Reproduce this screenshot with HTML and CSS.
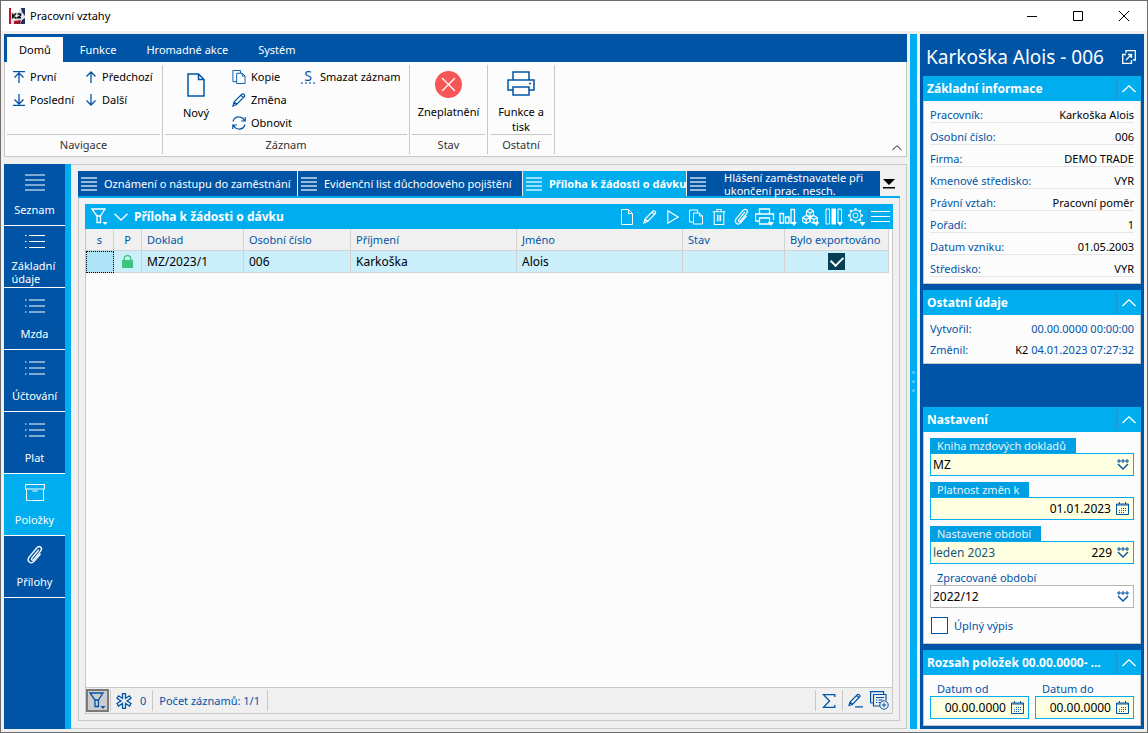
FILE: index.html
```html
<!DOCTYPE html>
<html lang="cs">
<head>
<meta charset="utf-8">
<meta name="viewport" content="width=device-width, initial-scale=1">
<title>Pracovní vztahy</title>
<link rel="stylesheet" href="styles.css">
</head>
<body>
<svg class="sprite" aria-hidden="true">
  <symbol id="i-lines" viewBox="0 0 20 18"><path d="M0 1.500h20M0 6.500h20M0 11.500h20M0 16.500h20"/></symbol>
  <symbol id="i-list" viewBox="0 0 20 16"><path d="M0 1.500h1.500M0 7.500h1.500M0 13.500h1.500M4 1.500h16M4 7.500h16M4 13.500h16"/></symbol>
  <symbol id="i-box" viewBox="0 0 20 18"><path d="M.5 1h19v4.500h-19zM1.500 5.500v11.500h17v-11.500M7.500 7.500h5"/></symbol>
  <symbol id="i-clip" viewBox="0 0 18 20"><path stroke-width="1.300" d="M12.500 5.500l-6.500 8c-1 1.400.6 2.700 1.700 1.400l6.800-8.300c2.200-3-1.300-5.700-3.700-3L3.500 12.300c-2.900 4 1.500 7.700 4.800 4l6-7"/></symbol>
  <symbol id="i-page" viewBox="0 0 18 24"><path d="M1 1h10.500L17 6.500V23H1zM11.500 1v5.500H17"/></symbol>
  <symbol id="i-page-s" viewBox="0 0 12 16"><path d="M.5.500h7l4 4v11H.5zM7.500.500v4h4"/></symbol>
  <symbol id="i-copy" viewBox="0 0 14 15"><path d="M4.500 12.500h-4v-12h8v3M4.500 3.500h6l3 3v8h-9zM10.500 3.500v3h3"/></symbol>
  <symbol id="i-pen" viewBox="0 0 14 14"><path stroke-width="1.200" d="M1 13l1-4 8-8c1.500-.8 3.200 1 2.500 2.500l-8 8zM2 9l3 2.800M9 2.200l2.700 2.600"/></symbol>
  <symbol id="i-refresh" viewBox="0 0 14 14"><path stroke-width="1.200" d="M1 5.500C2 2 5 .8 7.500 1s4 1.700 5 3.500M13.200 1v4h-4M13 8.500c-1 3.500-4 4.700-6.500 4.500s-4-1.700-5-3.500M.8 13V9h4"/></symbol>
  <symbol id="i-first" viewBox="0 0 12 12"><path stroke-width="1.300" d="M0 .7h12M6 12V2M1.500 6.500L6 2l4.500 4.500"/></symbol>
  <symbol id="i-last" viewBox="0 0 12 12"><path stroke-width="1.300" d="M0 11.300h12M6 0v10M1.500 5.500L6 10l4.500-4.500"/></symbol>
  <symbol id="i-up" viewBox="0 0 12 12"><path stroke-width="1.300" d="M6 12V1M1.500 5.500L6 1l4.500 4.500"/></symbol>
  <symbol id="i-down" viewBox="0 0 12 12"><path stroke-width="1.300" d="M6 0v11M1.500 6.500L6 11l4.500-4.500"/></symbol>
  <symbol id="i-printer" viewBox="0 0 28 26"><path d="M6 9V1h16v8M6 19H1V9h26v10h-5M6 16h16v8H6zM22 12.500h2"/></symbol>
  <symbol id="i-funnel" viewBox="0 0 17 17"><path stroke-width="1.300" d="M1 1h13L9.500 8v6.500h-3.500V8zM6 8h3.500"/><path class="solid" d="M11.500 14h5l-2.500 3z"/></symbol>
  <symbol id="i-chev-up" viewBox="0 0 14 8"><path stroke-width="1.300" d="M.5 7L7 .8 13.500 7"/></symbol>
  <symbol id="i-chev-down" viewBox="0 0 14 8"><path stroke-width="1.300" d="M.5 .8L7 7 13.500 .8"/></symbol>
  <symbol id="i-play" viewBox="0 0 12 14"><path d="M1.500 1.500l9 5.500-9 5.500z"/></symbol>
  <symbol id="i-trash" viewBox="0 0 12 15"><path d="M0 2.500h12M4 2.500v-2h4v2M1.500 2.500v12h9v-12M4.500 5.500v6M6 5.500v6M7.500 5.500v6"/></symbol>
  <symbol id="i-print-s" viewBox="0 0 20 18"><path stroke-width="1.300" d="M4.500 6V1h10v5M4.500 13h-4V6h18v6M4.500 10h10v6h-10z"/><path class="solid" d="M13 14h6l-3 4z"/></symbol>
  <symbol id="i-chart" viewBox="0 0 18 18"><path stroke-width="1.300" d="M1 5.500h3.500v9.500H1zM6.500 9h3.500v6H6.500zM12 1.500h3.500v13.500H12z"/><path class="solid" d="M12 14h6l-3 4z"/></symbol>
  <symbol id="i-cubes" viewBox="0 0 18 18"><path stroke-width="1.200" d="M8 1l3.500 2v4L8 9 4.500 7V3zM4.500 3L8 5l3.500-2M8 5v4M4.200 7.500l3.500 2v4l-3.500 2-3.500-2v-4zM.7 9.500l3.500 2 3.500-2M4.200 11.500v4M11.800 7.500l3.500 2v4l-3.500 2-3.500-2v-4zM8.300 9.500l3.500 2 3.500-2M11.800 11.500v4"/><path class="solid" d="M11.500 14h6l-3 4z"/></symbol>
  <symbol id="i-columns" viewBox="0 0 18 18"><path d="M1 1h3.500v15H1zM13 1h3.500v14H13z"/><path class="solid" d="M6.500.500h4.500v16H6.500zM12 14h6l-3 4z"/></symbol>
  <symbol id="i-gear" viewBox="0 0 18 18"><circle cx="7.500" cy="7.500" r="2.500"/><circle cx="7.500" cy="7.500" r="5.500"/><path stroke-width="2" d="M7.500 0v2M7.500 13v2M0 7.500h2M13 7.500h2M2.200 2.200l1.400 1.400M11.400 11.400l1.400 1.400M2.200 12.800l1.400-1.400M11.400 3.600l1.400-1.400"/><path class="solid" d="M11.500 14h6l-3 4z"/></symbol>
  <symbol id="i-menu" viewBox="0 0 19 13"><path d="M0 1.500h19M0 6.500h19M0 11.500h19"/></symbol>
  <symbol id="i-popout" viewBox="0 0 14 14"><path stroke-width="1.300" d="M4 4.500H.7v8.800h8.800V10M4 3V.7h9.300v9.300H11M6 4.500h3.500v3.500M4 10l5.500-5.500"/></symbol>
  <symbol id="i-lookup" viewBox="0 0 12 11"><path d="M1 1h2v2H1zM5 1h2v2H5zM9 1h2v2H9z"/><path stroke-width="1.400" d="M1 5l5 5 5-5"/></symbol>
  <symbol id="i-cal" viewBox="0 0 13 13"><path d="M.5 2h12v10.500H.5zM.5 3h12M3.500 0v2M9.500 0v2"/><path stroke-dasharray="1 1" d="M5 6.500h6M3 8.500h8M3 10.500h6"/></symbol>
  <symbol id="i-sum" viewBox="0 0 13 14"><path stroke-width="1.300" d="M12.300 3V.7H1L7 7l-6 6.300h11.300V11"/></symbol>
  <symbol id="i-star" viewBox="0 0 16 16"><path stroke-width="1.300" d="M6.500.7h3v4.600l4-2.500 1.500 2.400L11 8l4 2.500-1.500 2.500-4-2.500v4.800h-3v-4.800l-4 2.500L1 10.500 5 8 1 5.200l1.500-2.400 4 2.500z"/></symbol>
  <symbol id="i-sign" viewBox="0 0 15 14"><path stroke-width="1.200" d="M1 12l1-3.500L9.500 1c1.500-.6 2.800.8 2.500 2L4.500 11zM2 8.500L4.500 11M8.500 2l2.500 2.300M7 13.400h8"/></symbol>
  <symbol id="i-sheet" viewBox="0 0 19 19"><path stroke-width="1.200" d="M11 15H3.500V3.500M.6 12V.6h13v3M.6 12h3M3.500 3.500h12.500v6M6 6.500h8M6 9h1.200M6 11.500h1.200M8.500 9h4M8.500 11.500h2"/><circle class="plus" cx="14" cy="14" r="4.200"/><path d="M11.800 14h4.400M14 11.800v4.400"/></symbol>
  <symbol id="i-lock" viewBox="0 0 11 13"><path class="solid" d="M0 5h11v8H0z"/><path stroke-width="1.300" d="M2.200 5V3.500a3.300 3 0 0 1 6.600 0V5"/></symbol>
</svg>

<div class="window">
  <header class="titlebar">
    <svg class="logo" viewBox="0 0 16 16"><rect width="16" height="16" fill="#e2e4ea"/><path fill="#c8102e" d="M0 0h2v16H0z"/><path fill="#25305c" d="M12 0h4v8l-3-4zM13 12l3-2v6h-5z"/><path fill="#a3142b" d="M5 13l7-1-1 4H5z"/><path fill="#fff" d="M2 0h9l-2 4H2z"/><path stroke="#111" stroke-width="1.500" fill="none" d="M3.700 5.500v5M7 5.500L4.500 8 7 10.500M8.500 6h3v1.500L8.500 9.800H12"/></svg>
    <h1>Pracovní vztahy</h1>
    <div class="winctl">
      <button aria-label="Minimalizovat"><svg viewBox="0 0 10 10"><path d="M0 5.500h10"/></svg></button>
      <button aria-label="Maximalizovat"><svg viewBox="0 0 10 10"><path d="M.5.500h9v9h-9z"/></svg></button>
      <button aria-label="Zavřít"><svg viewBox="0 0 10 10"><path d="M0 0l10 10M10 0L0 10"/></svg></button>
    </div>
  </header>

  <div class="workspace">
    <div class="left">
      <section class="ribbon">
        <nav class="ribbon-tabs">
          <button class="on">Domů</button><button>Funkce</button><button>Hromadné akce</button><button>Systém</button>
        </nav>
        <div class="ribbon-body">
          <div class="group">
            <div class="tools">
              <div class="stack first-stack">
                <button><svg class="s12"><use href="#i-first"/></svg>První</button>
                <button><svg class="s12"><use href="#i-last"/></svg>Poslední</button>
              </div>
              <div class="stack">
                <button><svg class="s12"><use href="#i-up"/></svg>Předchozí</button>
                <button><svg class="s12"><use href="#i-down"/></svg>Další</button>
              </div>
            </div>
            <div class="caption">Navigace</div>
          </div>
          <div class="group wide">
            <div class="tools">
              <button class="big new"><svg class="page-icon"><use href="#i-page"/></svg>Nový</button>
              <div class="stack">
                <button><svg class="s14"><use href="#i-copy"/></svg>Kopie</button>
                <button><svg class="s14"><use href="#i-pen"/></svg>Změna</button>
                <button><svg class="s14"><use href="#i-refresh"/></svg>Obnovit</button>
              </div>
              <div class="stack">
                <button><span class="erase">S</span>Smazat záznam</button>
              </div>
            </div>
            <div class="caption">Záznam</div>
          </div>
          <div class="group state">
            <div class="tools">
              <button class="big"><svg class="stop-icon" viewBox="0 0 27 27"><circle cx="13.500" cy="13.500" r="13.500" fill="#f75656" stroke="none"/><path stroke="#fff" stroke-width="1.300" d="M7 7l13 13M20 7L7 20"/></svg>Zneplatnění</button>
            </div>
            <div class="caption">Stav</div>
          </div>
          <div class="group other">
            <div class="tools">
              <button class="big"><svg class="print-icon"><use href="#i-printer"/></svg>Funkce a<br>tisk</button>
            </div>
            <div class="caption">Ostatní</div>
          </div>
          <button class="collapse" aria-label="Sbalit pás"><svg viewBox="0 0 14 8"><use href="#i-chev-up"/></svg></button>
        </div>
      </section>

      <div class="lower">
        <nav class="side">
          <button><svg class="s20"><use href="#i-lines"/></svg><span>Seznam</span></button>
          <button class="two"><svg class="s20"><use href="#i-list"/></svg><span>Základní údaje</span></button>
          <button><svg class="s20"><use href="#i-list"/></svg><span>Mzda</span></button>
          <button><svg class="s20"><use href="#i-list"/></svg><span>Účtování</span></button>
          <button><svg class="s20"><use href="#i-list"/></svg><span>Plat</span></button>
          <button class="on"><svg class="s20"><use href="#i-box"/></svg><span>Položky</span></button>
          <button><svg class="s20"><use href="#i-clip"/></svg><span>Přílohy</span></button>
        </nav>

        <main class="content">
          <div class="doc-tabs">
            <button class="t1"><svg class="tab-icon"><path d="M0 1h16M0 5h16M0 9h16M0 13h16"/></svg><span>Oznámení o nástupu do zaměstnání</span></button>
            <button class="t2"><svg class="tab-icon"><path d="M0 1h16M0 5h16M0 9h16M0 13h16"/></svg><span>Evidenční list důchodového pojištění</span></button>
            <button class="t3 on"><svg class="tab-icon"><path d="M0 1h16M0 5h16M0 9h16M0 13h16"/></svg><span>Příloha k žádosti o dávku</span></button>
            <button class="t4"><svg class="tab-icon"><path d="M0 1h16M0 5h16M0 9h16M0 13h16"/></svg><span>Hlášení zaměstnavatele při ukončení prac. nesch.</span></button>
            <button class="more" aria-label="Další záložky"><svg viewBox="0 0 12 10"><path d="M0 0h12L6 6zM0 8h12v1.500H0z"/></svg></button>
          </div>
          <div class="sheet">
            <div class="grid-head">
              <button aria-label="Filtr"><svg class="s17"><use href="#i-funnel"/></svg></button>
              <button aria-label="Sbalit"><svg class="chev"><use href="#i-chev-down"/></svg></button>
              <h2>Příloha k žádosti o dávku</h2>
              <div class="grid-tools">
                <button aria-label="Nový"><svg class="s14x16"><use href="#i-page-s"/></svg></button>
                <button aria-label="Změna"><svg class="s14x16"><use href="#i-pen"/></svg></button>
                <button aria-label="Spustit"><svg class="s14x16"><use href="#i-play"/></svg></button>
                <button aria-label="Kopie"><svg class="s14x16"><use href="#i-copy"/></svg></button>
                <button aria-label="Smazat"><svg class="s14x16"><use href="#i-trash"/></svg></button>
                <button aria-label="Přílohy"><svg class="s19"><use href="#i-clip"/></svg></button>
                <button class="sep" aria-label="Tisk"><svg class="s20"><use href="#i-print-s"/></svg></button>
                <button aria-label="Grafy"><svg class="s18"><use href="#i-chart"/></svg></button>
                <button aria-label="Kostky"><svg class="s18"><use href="#i-cubes"/></svg></button>
                <button aria-label="Sloupce"><svg class="s18"><use href="#i-columns"/></svg></button>
                <button aria-label="Nastavení"><svg class="s18"><use href="#i-gear"/></svg></button>
                <button class="sep" aria-label="Menu"><svg class="menu-icon"><use href="#i-menu"/></svg></button>
              </div>
            </div>
            <div class="grid-body">
              <table>
                <colgroup><col class="c28"><col class="c28"><col class="c102"><col class="c107"><col><col><col class="c102"><col class="c104"></colgroup>
                <thead><tr><th class="mid">s</th><th class="mid">P</th><th>Doklad</th><th>Osobní číslo</th><th>Příjmení</th><th>Jméno</th><th>Stav</th><th>Bylo exportováno</th></tr></thead>
                <tbody><tr><td class="focus"></td><td class="mid"><svg class="lock"><use href="#i-lock"/></svg></td><td>MZ/2023/1</td><td>006</td><td>Karkoška</td><td>Alois</td><td></td><td class="mid"><input type="checkbox" class="done" checked aria-label="Bylo exportováno"></td></tr></tbody>
              </table>
            </div>
            <footer class="status">
              <button class="filter" aria-label="Filtr"><svg class="s17"><use href="#i-funnel"/></svg></button>
              <button class="star" aria-label="Označené"><svg class="s16"><use href="#i-star"/></svg>0</button>
              <span class="count">Počet záznamů: 1/1</span>
              <span class="fill"></span>
              <button class="sum" aria-label="Součet"><svg class="s14"><use href="#i-sum"/></svg></button>
              <button aria-label="Upravit"><svg class="s15"><use href="#i-sign"/></svg></button>
              <button aria-label="Přidat seznam"><svg class="s19"><use href="#i-sheet"/></svg></button>
            </footer>
          </div>
        </main>
      </div>
    </div>

    <div class="splitter"><i></i><i></i><i></i></div>

    <aside class="info">
      <header><h2>Karkoška Alois - 006</h2><button aria-label="Otevřít"><svg class="s14"><use href="#i-popout"/></svg></button></header>

      <section class="card">
        <div class="card-head"><h3>Základní informace</h3><button aria-label="Sbalit"><svg class="chev"><use href="#i-chev-up"/></svg></button></div>
        <dl class="facts ruled">
          <div><dt>Pracovník:</dt><dd>Karkoška Alois</dd></div>
          <div><dt>Osobní číslo:</dt><dd>006</dd></div>
          <div><dt>Firma:</dt><dd>DEMO TRADE</dd></div>
          <div><dt>Kmenové středisko:</dt><dd>VYR</dd></div>
          <div><dt>Právní vztah:</dt><dd>Pracovní poměr</dd></div>
          <div><dt>Pořadí:</dt><dd>1</dd></div>
          <div><dt>Datum vzniku:</dt><dd>01.05.2003</dd></div>
          <div><dt>Středisko:</dt><dd>VYR</dd></div>
        </dl>
      </section>

      <section class="card last-fact">
        <div class="card-head"><h3>Ostatní údaje</h3><button aria-label="Sbalit"><svg class="chev"><use href="#i-chev-up"/></svg></button></div>
        <dl class="facts plain">
          <div><dt>Vytvořil:</dt><dd><em>00.00.0000 00:00:00</em></dd></div>
          <div><dt>Změnil:</dt><dd>K2 <em>04.01.2023 07:27:32</em></dd></div>
        </dl>
      </section>

      <section class="card">
        <div class="card-head"><h3>Nastavení</h3><button aria-label="Sbalit"><svg class="chev"><use href="#i-chev-up"/></svg></button></div>
        <div class="form">
          <div class="field req"><label for="f1">Kniha mzdových dokladů</label><div class="box"><input id="f1" value="MZ"><button aria-label="Vybrat knihu"><svg class="look"><use href="#i-lookup"/></svg></button></div></div>
          <div class="field req"><label for="f2">Platnost změn k</label><div class="box"><input id="f2" class="num" value="01.01.2023"><button aria-label="Kalendář"><svg class="s13"><use href="#i-cal"/></svg></button></div></div>
          <div class="field req"><label for="f3">Nastavené období</label><div class="box"><input id="f3" class="blue" value="leden 2023"><output>229</output><button aria-label="Vybrat období"><svg class="look"><use href="#i-lookup"/></svg></button></div></div>
          <div class="field"><label for="f4">Zpracované období</label><div class="box"><input id="f4" value="2022/12"><button aria-label="Vybrat období"><svg class="look"><use href="#i-lookup"/></svg></button></div></div>
          <label class="check"><input type="checkbox">Úplný výpis</label>
        </div>
      </section>

      <section class="card">
        <div class="card-head"><h3>Rozsah položek 00.00.0000- ...</h3><button aria-label="Sbalit"><svg class="chev"><use href="#i-chev-up"/></svg></button></div>
        <div class="form range">
          <div class="field date"><label for="f5">Datum od</label><div class="box"><input id="f5" class="num" value="00.00.0000"><button aria-label="Kalendář"><svg class="s13"><use href="#i-cal"/></svg></button></div></div>
          <div class="field date"><label for="f6">Datum do</label><div class="box"><input id="f6" class="num" value="00.00.0000"><button aria-label="Kalendář"><svg class="s13"><use href="#i-cal"/></svg></button></div></div>
        </div>
      </section>
    </aside>
  </div>
</div>
</body>
</html>
```
FILE: styles.css
```css
:root {
  --blue: #0054a6;
  --cyan: #00adef;
  --line: #c8c8c8;
  --soft: #f0f0f0;
  --paper: #fcfcfc;
}
* { box-sizing: border-box; }
body { margin: 0; font: 11px/16px "Noto Sans", "Open Sans", sans-serif; color: #000; }
h1, h2, h3, dl, dd { margin: 0; font: inherit; }
button { margin: 0; padding: 0; border: 0; background: none; color: inherit; font: inherit; cursor: pointer; }
input { font: inherit; }
svg { display: block; flex: none; fill: none; stroke: currentColor; stroke-width: 1; }
.sprite { position: absolute; width: 0; height: 0; }
.solid { fill: currentColor; stroke: none; }
.plus { fill: var(--soft); }
.s12 { width: 12px; height: 12px; }
.s13 { width: 13px; height: 13px; }
.s14 { width: 14px; height: 14px; }
.s15 { width: 15px; height: 15px; }
.s16 { width: 16px; height: 16px; }
.s17 { width: 17px; height: 17px; }
.s18 { width: 18px; height: 18px; }
.s19 { width: 19px; height: 19px; }
.s20 { width: 20px; height: 20px; }
.s14x16 { width: 14px; height: 16px; }
.chev { width: 14px; height: 8px; }
.look { width: 12px; height: 11px; }

.window { display: flex; flex-direction: column; min-height: 100vh; border: 1px solid #6d6d6d; background: var(--soft); }
.titlebar { display: flex; align-items: center; height: 30px; padding-left: 8px; background: #fff; }
.logo { width: 16px; height: 16px; stroke: none; }
.titlebar h1 { flex: 1; margin-left: 5px; }
.winctl { display: flex; }
.winctl button { display: grid; place-items: center; width: 46px; height: 30px; }
.winctl svg { width: 10px; height: 10px; overflow: visible; }

.workspace { flex: 1; display: flex; gap: 3px; padding: 3px; }
.left { flex: 1; min-width: 0; display: flex; flex-direction: column; gap: 7px; }

.ribbon-tabs { display: flex; height: 28px; padding: 3px 3px 0; background: var(--blue); color: #fff; }
.ribbon-tabs button { padding: 0 15px; }
.ribbon-tabs button:first-child { margin-right: 2px; padding: 0 12px; }
.ribbon-tabs .on { background: var(--paper); color: #000; }
.ribbon-body { position: relative; display: flex; height: 95px; border: 1px solid var(--line); border-top: 0; background: var(--paper); }
.group { display: flex; flex-direction: column; margin: 3px 0 2px; padding: 0 2px; border-right: 1px solid var(--line); width: 158px; }
.wide { width: 247px; }
.state { width: 78px; }
.other { width: 67px; }
.tools { flex: 1; display: flex; border-bottom: 1px solid var(--line); color: #000; }
.caption { height: 19px; line-height: 20px; text-align: center; color: #333; }
.stack { display: flex; flex-direction: column; align-items: flex-start; margin-right: 9px; }
.first-stack { margin-left: 6px; margin-right: 11px; }
.stack button { display: flex; align-items: center; gap: 5px; height: 23px; white-space: nowrap; }
.stack svg, .big svg { color: var(--blue); }
.big { display: flex; flex-direction: column; align-items: center; width: 100%; line-height: 15px; }
.new { flex: none; width: 62px; margin-right: 5px; padding-top: 8px; gap: 8px; }
.page-icon { width: 18px; height: 24px; stroke-width: 1.500; }
.stop-icon { width: 27px; height: 27px; margin: 6px 0 6px; }
.print-icon { width: 28px; height: 26px; margin: 6px 0 7px; stroke-width: 1.500; }
.erase { width: 14px; height: 14px; border-bottom: 2px dotted #6ba0d4; color: var(--blue); font-size: 14px; line-height: 11px; text-align: center; }
.collapse { position: absolute; right: 4px; bottom: 4px; }
.collapse svg { width: 10px; height: 8px; }

.lower { flex: 1; display: flex; }
.side { flex: none; width: 67px; border-right: 6px solid var(--cyan); background: var(--blue); color: #fff; }
.side button { display: flex; flex-direction: column; align-items: center; width: 100%; height: 62px; padding-top: 8px; border-bottom: 1px solid #fff; line-height: 13px; }
.side svg { height: 21px; }
.side span { margin-top: 10px; }
.side .two svg { height: 16px; }
.side .two span { width: 46px; margin-top: 9px; text-align: left; }
.side .on { background: var(--cyan); }
.content { flex: 1; min-width: 0; display: flex; flex-direction: column; padding: 6px 6px 7px 7px; border: 1px solid var(--line); border-left: 0; }
.doc-tabs { display: flex; gap: 1px; height: 27px; border-bottom: 2px solid var(--cyan); color: #fff; line-height: 13px; }
.doc-tabs button { display: flex; align-items: center; padding: 0 0 0 3px; background: var(--blue); text-align: left; }
.doc-tabs span { flex: 1; white-space: nowrap; }
.tab-icon { width: 16px; height: 14px; margin-right: 7px; opacity: .6; stroke-width: 2; }
.doc-tabs .t1 { width: 219px; }
.doc-tabs .t2 { width: 224px; }
.doc-tabs .t3 { width: 163px; font-weight: bold; }
.doc-tabs .on { background: var(--cyan); }
.doc-tabs .t4 { width: 193px; }
.doc-tabs .t4 span { margin: 0 6px 0 11px; white-space: normal; }
.doc-tabs .more { margin-left: auto; padding: 0 5px 0 0; background: none; color: #000; }
.more svg { width: 12px; height: 10px; fill: #000; stroke: none; }
.sheet { flex: 1; display: flex; flex-direction: column; padding: 6px; border: 1px solid var(--line); border-top: 0; }
.grid-head { display: flex; align-items: center; height: 25px; padding: 0 2px 0 6px; background: var(--cyan); color: #fff; }
.grid-head h2 { flex: 1; font-size: 12px; font-weight: bold; }
.grid-head > button { margin-right: 6px; }
.grid-tools { display: flex; }
.grid-tools button { display: grid; place-items: center; width: 23px; height: 21px; }
.grid-tools .sep { border-left: 1px solid #2391c8; }
.menu-icon { width: 19px; height: 13px; }
.grid-body { flex: 1; padding-right: 3px; border: solid var(--line); border-width: 0 1px; background: var(--paper); }
table { width: 100%; table-layout: fixed; border-collapse: separate; border-spacing: 0; }
.c28 { width: 28px; }
.c102 { width: 102px; }
.c104 { width: 104px; }
.c107 { width: 107px; }
th, td { height: 22px; padding: 0 0 0 5px; border: solid #d2d2d2; border-width: 0 1px 1px 0; text-align: left; font-weight: normal; white-space: nowrap; }
th { background: var(--soft); color: var(--blue); }
td { background: #cbeefb; font-size: 12px; }
.mid { padding: 0; text-align: center; }
.focus { background: #afe3f8; outline: 1px dotted #000; outline-offset: -1px; }
.lock { width: 11px; height: 13px; margin: 0 auto; color: #3cc57c; }
.done { display: grid; place-items: center; appearance: none; width: 17px; height: 17px; margin: 0 auto; background: #063f57; }
.done::before { content: ""; width: 10px; height: 6px; margin-bottom: 3px; border: solid #fff; border-width: 0 0 2px 2px; rotate: -45deg; }
.status { display: flex; align-items: center; height: 27px; border: 1px solid var(--line); background: var(--soft); color: var(--blue); }
.status button, .count { display: flex; align-items: center; height: 21px; }
.status .filter { justify-content: center; width: 23px; height: 23px; border: 2px solid #7a7a7a; background: #ccc; }
.status .star { gap: 8px; margin-left: 1px; padding: 0 6px 0 5px; border-left: 1px solid var(--line); }
.count { padding: 0 7px 0 6px; border: solid var(--line); border-width: 0 1px; }
.fill { flex: 1; }
.status .sum { padding: 0 6px; margin-right: 5px; border: solid var(--line); border-width: 0 1px; }
.status button:last-child { margin: 0 3px 0 7px; }

.splitter { flex: none; display: flex; flex-direction: column; align-items: center; justify-content: center; gap: 6px; width: 7px; background: var(--cyan); }
.splitter i { width: 3px; height: 3px; border-radius: 2px; background: #5ccaf5; }

.info { flex: none; display: flex; flex-direction: column; width: 224px; padding: 0 3px 3px; background: var(--blue); }
.info > header { display: flex; align-items: center; justify-content: space-between; height: 42px; padding: 4px 5px 0 3px; color: #fff; }
.info > header h2 { font-size: 19px; line-height: 24px; white-space: nowrap; }
.card { margin-bottom: 6px; border: 1px solid var(--line); border-top: 0; background: var(--paper); }
.card:last-child { flex: 1; margin-bottom: 0; }
.last-fact { margin-bottom: 43px; }
.card-head { display: flex; align-items: center; justify-content: space-between; height: 25px; margin: 0 -1px; padding-left: 4px; background: var(--cyan); color: #fff; }
.card-head h3 { font-size: 12px; font-weight: bold; white-space: nowrap; }
.card-head button { display: grid; place-items: center; width: 25px; height: 21px; border-left: 1px solid #2391c8; }
.facts { padding: 0 6px 6px; }
.facts div { display: flex; justify-content: space-between; height: 22px; line-height: 15px; padding-top: 6px; white-space: nowrap; }
.ruled div { border-bottom: 1px solid #e6e6e6; }
.plain div { height: 21px; }
.facts dt, .facts em { color: var(--blue); font-style: normal; }
.form { padding: 6px 6px 9px; }
.field { display: flex; flex-direction: column; align-items: flex-start; margin-bottom: 6px; }
.field label { height: 15px; padding: 0 10px 0 7px; color: var(--blue); line-height: 15px; }
.req label { background: #009fe3; color: #e4f5fd; }
.box { display: flex; align-items: center; width: 100%; height: 23px; padding-right: 4px; border: 1px solid #b4b4b4; background: #fff; font-size: 12px; }
.req .box, .date .box { border-color: var(--cyan); background: #ffffe1; }
.box input { flex: 1; min-width: 0; width: 0; height: 21px; padding: 0 2px; border: 0; background: none; outline: 0; }
.box .num { text-align: right; }
.box .blue { color: #17577e; }
.box output { padding-right: 2px; }
.box button { margin-left: 3px; color: var(--blue); }
.check { display: flex; align-items: center; gap: 6px; padding: 3px 0 0 1px; color: var(--blue); }
.check input { appearance: none; width: 17px; height: 17px; margin: 0; border: 1px solid var(--blue); background: #fff; }
.range { display: flex; gap: 6px; padding-bottom: 0; }
.range .field { flex: 1; min-width: 0; margin-bottom: 6px; }
```
